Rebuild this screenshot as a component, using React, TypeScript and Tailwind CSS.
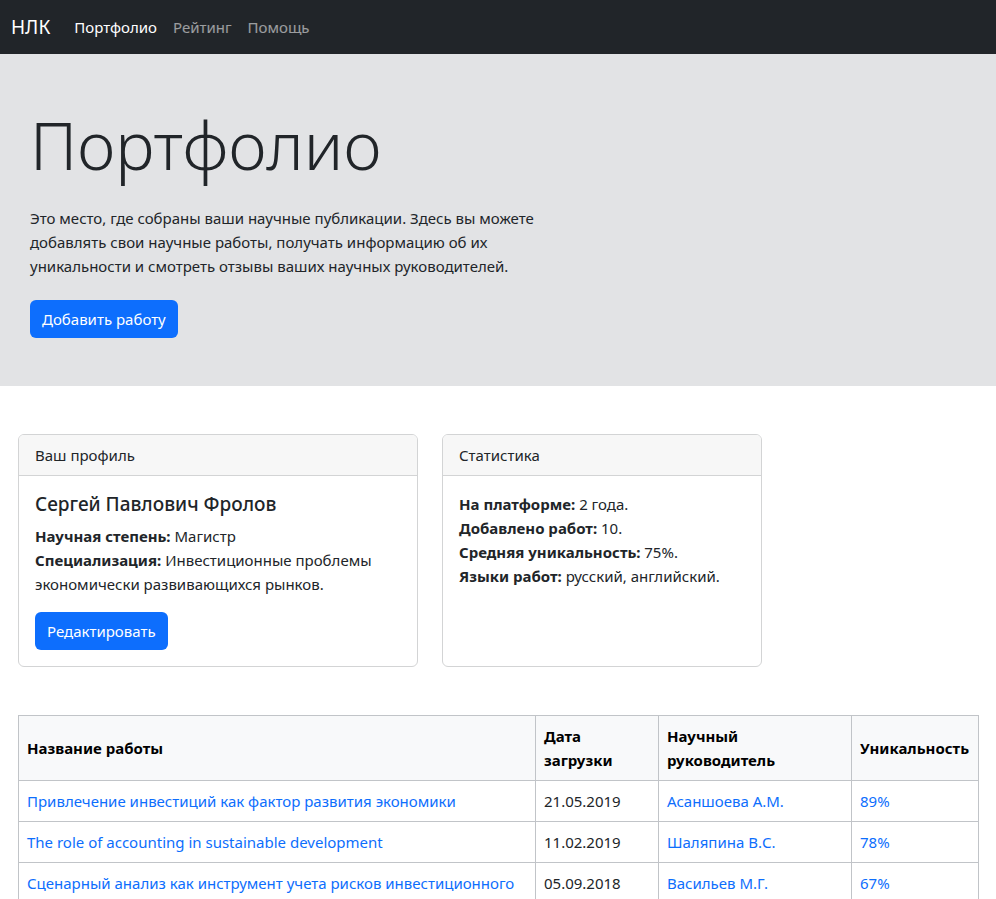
import React from "react";

const rows = [
  {
    title: "Привлечение инвестиций как фактор развития экономики",
    date: "21.05.2019",
    tutor: "Асаншоева А.М.",
    score: "89%",
  },
  {
    title: "The role of accounting in sustainable development",
    date: "11.02.2019",
    tutor: "Шаляпина В.С.",
    score: "78%",
  },
  {
    title: "Сценарный анализ как инструмент учета рисков инвестиционного",
    date: "05.09.2018",
    tutor: "Васильев М.Г.",
    score: "67%",
  },
];

function App() {
  return (
    <div className="min-h-screen bg-white text-[#212529] font-['Noto_Sans',sans-serif] text-[15px] leading-6">
      {/* Navbar */}
      <nav className="h-[54px] bg-[#212529] flex items-center px-[11px]">
        <span className="text-white text-[19px] mr-[16px]">НЛК</span>
        <a className="px-2 text-white">Портфолио</a>
        <a className="px-2 text-white/55">Рейтинг</a>
        <a className="px-2 text-white/55">Помощь</a>
      </nav>

      {/* Jumbotron */}
      <section className="bg-[#e2e3e5] px-[30px] pt-12 pb-12">
        <h1 className="text-[66px] font-light leading-[85px] mb-[19px]">Портфолио</h1>
        <p className="max-w-[540px]">
          Это место, где собраны ваши научные публикации. Здесь вы можете
          добавлять свои научные работы, получать информацию об их
          уникальности и смотреть отзывы ваших научных руководителей.
        </p>
        <button className="mt-[22px] h-[38px] px-3 bg-[#0d6efd] text-white rounded-md">
          Добавить работу
        </button>
      </section>

      {/* Cards */}
      <div className="px-[18px] pt-12">
        <div className="flex gap-6">
          <div className="w-[400px] border border-[#d3d4d5] rounded-md overflow-hidden">
            <div className="bg-[#f7f7f7] px-4 py-2 border-b border-[#d3d4d5]">Ваш профиль</div>
            <div className="p-4">
              <h5 className="text-[19px] font-medium leading-6 mb-2">Сергей Павлович Фролов</h5>
              <p>
                <b>Научная степень:</b> Магистр
              </p>
              <p>
                <b>Специализация:</b> Инвестиционные проблемы экономически развивающихся рынков.
              </p>
              <button className="mt-4 h-[38px] px-3 bg-[#0d6efd] text-white rounded-md">
                Редактировать
              </button>
            </div>
          </div>

          <div className="w-[320px] border border-[#d3d4d5] rounded-md overflow-hidden">
            <div className="bg-[#f7f7f7] px-4 py-2 border-b border-[#d3d4d5]">Статистика</div>
            <div className="p-4">
              <p><b>На платформе:</b> 2 года.</p>
              <p><b>Добавлено работ:</b> 10.</p>
              <p><b>Средняя уникальность:</b> 75%.</p>
              <p><b>Языки работ:</b> русский, английский.</p>
            </div>
          </div>
        </div>

        {/* Table */}
        <table className="mt-12 w-[960px] table-fixed border-collapse">
          <thead>
            <tr className="bg-[#f8f9fa] text-left font-bold text-black">
              <th className="w-[517px] border border-[#c1c4c8] px-2 py-2 align-middle">Название работы</th>
              <th className="w-[123px] border border-[#c1c4c8] px-2 py-2 align-middle">Дата загрузки</th>
              <th className="w-[193px] border border-[#c1c4c8] px-2 py-2 align-middle">Научный руководитель</th>
              <th className="w-[127px] border border-[#c1c4c8] px-2 py-2 align-middle">Уникальность</th>
            </tr>
          </thead>
          <tbody>
            {rows.map((r) => (
              <tr key={r.date}>
                <td className="border border-[#c1c4c8] px-2 py-2 text-[#0d6efd] whitespace-nowrap overflow-hidden">{r.title}</td>
                <td className="border border-[#c1c4c8] px-2 py-2">{r.date}</td>
                <td className="border border-[#c1c4c8] px-2 py-2 text-[#0d6efd]">{r.tutor}</td>
                <td className="border border-[#c1c4c8] px-2 py-2 text-[#0d6efd]">{r.score}</td>
              </tr>
            ))}
          </tbody>
        </table>
      </div>
    </div>
  );
}

export default App;
